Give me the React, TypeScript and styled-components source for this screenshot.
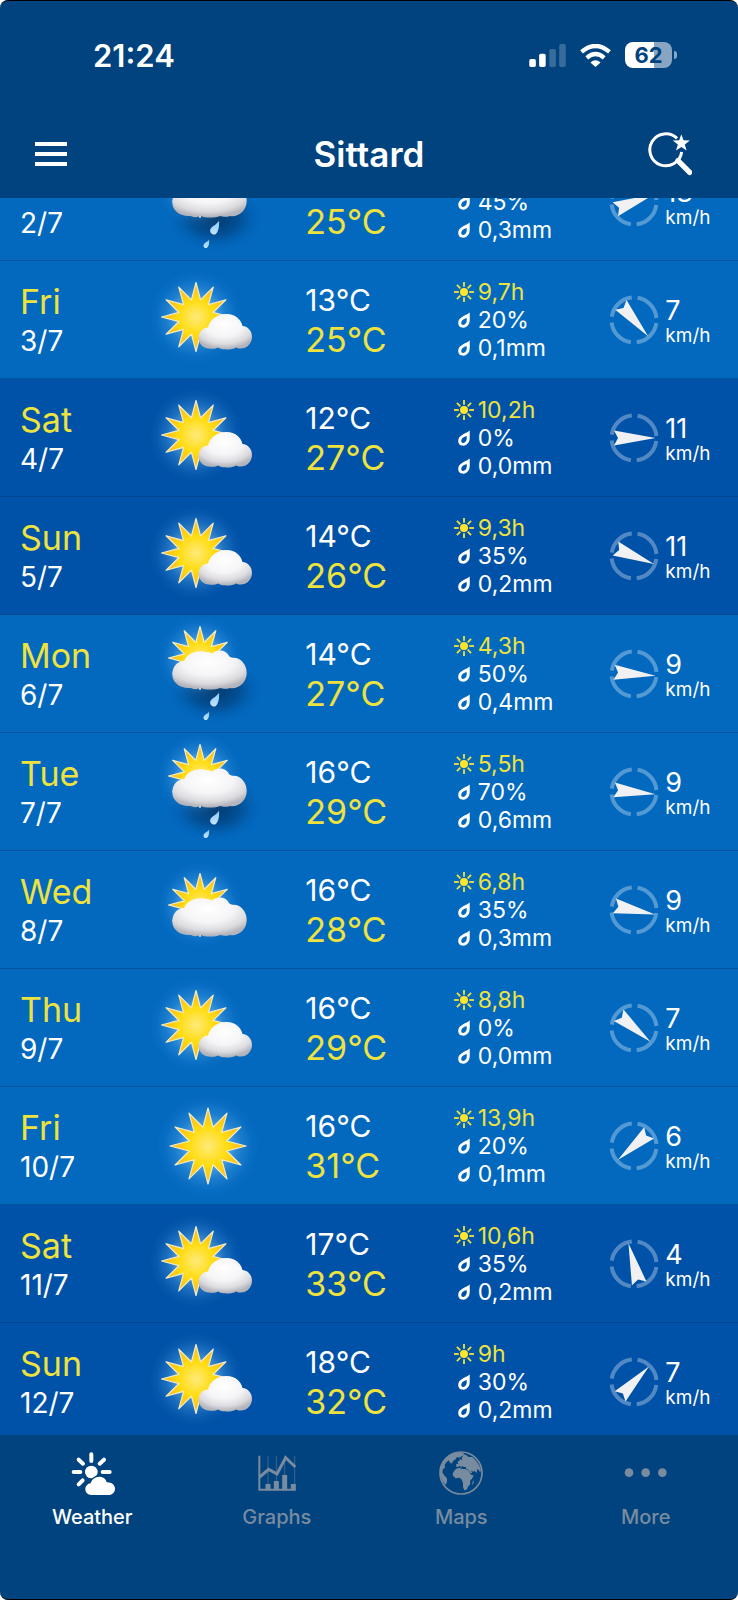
import { memo, ReactNode, useLayoutEffect, useRef } from "react";
import styled, { createGlobalStyle, css } from "styled-components";

type Sky = 'sun' | 'partly' | 'cloudy' | 'rain'

interface Day {
    name:string
    date:string
    sky:Sky
    low:number
    high:number
    sun:string
    chance:string
    rain:string
    wind:number
    angle:number
    weekend?:boolean
}

const days:Day[] = [
    {name:'Thu', date:'2/7', sky:'rain', low:15, high:25, sun:'5,1h', chance:'45%', rain:'0,3mm', wind:13, angle:-21},
    {name:'Fri', date:'3/7', sky:'partly', low:13, high:25, sun:'9,7h', chance:'20%', rain:'0,1mm', wind:7, angle:49},
    {name:'Sat', date:'4/7', sky:'partly', low:12, high:27, sun:'10,2h', chance:'0%', rain:'0,0mm', wind:11, angle:0, weekend:true},
    {name:'Sun', date:'5/7', sky:'partly', low:14, high:26, sun:'9,3h', chance:'35%', rain:'0,2mm', wind:11, angle:22, weekend:true},
    {name:'Mon', date:'6/7', sky:'rain', low:14, high:27, sun:'4,3h', chance:'50%', rain:'0,4mm', wind:9, angle:5},
    {name:'Tue', date:'7/7', sky:'rain', low:16, high:29, sun:'5,5h', chance:'70%', rain:'0,6mm', wind:9, angle:6},
    {name:'Wed', date:'8/7', sky:'cloudy', low:16, high:28, sun:'6,8h', chance:'35%', rain:'0,3mm', wind:9, angle:12},
    {name:'Thu', date:'9/7', sky:'partly', low:16, high:29, sun:'8,8h', chance:'0%', rain:'0,0mm', wind:7, angle:40},
    {name:'Fri', date:'10/7', sky:'sun', low:16, high:31, sun:'13,9h', chance:'20%', rain:'0,1mm', wind:6, angle:139},
    {name:'Sat', date:'11/7', sky:'partly', low:17, high:33, sun:'10,6h', chance:'35%', rain:'0,2mm', wind:4, angle:-105, weekend:true},
    {name:'Sun', date:'12/7', sky:'partly', low:18, high:32, sun:'9h', chance:'30%', rain:'0,2mm', wind:7, angle:-46, weekend:true},
]

const star = (cx:number, cy:number, outer:number, inner:number, spikes:number)=>{
    const points:string[] = []
    for(let i = 0; i < spikes * 2; i++){
        const r = i % 2 === 0 ? outer : inner
        const a = Math.PI * i / spikes - Math.PI / 2
        points.push(`${(cx + r * Math.cos(a)).toFixed(2)},${(cy + r * Math.sin(a)).toFixed(2)}`)
    }
    return points.join(' ')
}

const SMALL_CLOUD = "M60 66.5C62 58 70 52.5 79 53C87 53 93 58 94.5 65C100 65.5 104 70 104 76C104 83 98 88 92 87.5C90 87.5 89 87 88 86.5C85 88.5 80 88.8 77 88.3C74 88.5 72 87.5 70 86.5C68 87.8 64 88 61 87.5C55 87 50.5 82.5 50.5 77C50.5 71 55 66.5 60 66.5Z"
const BIG_CLOUD = "M36 57C39 50 47 46 56 47.5C60 48 62 48.5 64 49.5C68 45 78 45 81 52C82 53 82.5 53.5 83 54C92 52 98.7 60 98.7 69C98.7 79 90 85.5 82 84C78 85.2 75 85 72 84C67 86 57 86 53 84C49 85.500 45 85.500 43 84C33 85 24.3 79 24.3 70.5C24.3 62 30 57 36 57Z"

/* shared gradients, referenced by every sky icon */
const SkyDefs = ()=>(
    <HiddenSvg aria-hidden="true">
        <defs>
            <radialGradient id="glow">
                <stop offset="0.4" stopColor="#8fd0ff" stopOpacity="0.55" />
                <stop offset="0.65" stopColor="#5aaef5" stopOpacity="0.28" />
                <stop offset="0.85" stopColor="#5aaef5" stopOpacity="0.07" />
                <stop offset="1" stopColor="#5aaef5" stopOpacity="0" />
            </radialGradient>
            <radialGradient id="sunFill">
                <stop offset="0" stopColor="#ffea7a" />
                <stop offset="0.5" stopColor="#ffdc10" />
                <stop offset="1" stopColor="#f9b420" />
            </radialGradient>
            <radialGradient id="cloudFill" cx="0.48" cy="0.3" r="0.68">
                <stop offset="0" stopColor="#ffffff" />
                <stop offset="0.5" stopColor="#f5f5f7" />
                <stop offset="0.8" stopColor="#dcdce0" />
                <stop offset="1" stopColor="#b4b5bc" />
            </radialGradient>
            <radialGradient id="shade">
                <stop offset="0" stopColor="#02325f" stopOpacity="0.9" />
                <stop offset="0.5" stopColor="#02407c" stopOpacity="0.65" />
                <stop offset="0.8" stopColor="#024a90" stopOpacity="0.2" />
                <stop offset="1" stopColor="#0250a0" stopOpacity="0" />
            </radialGradient>
            <linearGradient id="dropFill" x1="0" y1="0" x2="0" y2="1">
                <stop offset="0" stopColor="#8cc6f5" />
                <stop offset="1" stopColor="#c3e4ff" />
            </linearGradient>
        </defs>
    </HiddenSvg>
)

const Sun = ({cx, cy, r}:{cx:number, cy:number, r:number})=>(
    <>
        <circle cx={cx} cy={cy} r={r * 1.35} fill="url(#glow)" />
        <polygon
            points={star(cx, cy, r, r * 0.51, 12)}
            fill="url(#sunFill)" stroke="#f3ebc4" strokeWidth="1.2" strokeLinejoin="round"
        />
    </>
)

const SkyIcon = memo(({sky}:{sky:Sky})=>{
    if(sky === 'sun'){
        return (
            <StyledSky viewBox="0 0 120 117" role="img" aria-label="Sunny">
                <Sun cx={60} cy={59} r={38} />
            </StyledSky>
        )
    }
    if(sky === 'partly'){
        return (
            <StyledSky viewBox="0 0 120 117" role="img" aria-label="Partly cloudy">
                <Sun cx={48} cy={56} r={34.5} />
                <path d={SMALL_CLOUD} fill="url(#cloudFill)" />
            </StyledSky>
        )
    }
    return (
        <StyledSky viewBox="0 0 120 117" role="img" aria-label={sky === 'rain' ? 'Showers' : 'Mostly cloudy'}>
            <g transform={sky === 'rain' ? 'translate(0 -11)' : undefined}>
                {sky === 'rain' && <ellipse cx="67" cy="86" rx="47" ry="33" fill="url(#shade)" />}
                <Sun cx={52} cy={54} r={31.5} />
                <path d={BIG_CLOUD} fill="url(#cloudFill)" />
                {sky === 'rain' && (
                    <g fill="url(#dropFill)">
                        <path d="M71 88.500C71.500 94 70.500 100 67.500 102.200C64.500 103.500 61 100.500 62.500 97C64 94 69 92.500 71 88.500Z" />
                        <path d="M61 107.500C61.500 111 60.800 115 58.500 116C56 116.500 54.800 114 56 112C57.500 110 60 109.800 61 107.500Z" />
                    </g>
                )}
            </g>
        </StyledSky>
    )
})

const RayIcon = ()=>(
    <StyledSmallIcon viewBox="0 0 20 20" aria-hidden="true">
        <circle cx="10" cy="10" r="4" fill="#ffe52e" />
        <g stroke="#f3e43c" strokeWidth="1.8">
            {[0, 45, 90, 135, 180, 225, 270, 315].map((a)=>(
                <path key={a} d="M15.2 10H20" transform={`rotate(${a} 10 10)`} />
            ))}
        </g>
    </StyledSmallIcon>
)

const DropIcon = ()=>(
    <StyledSmallIcon viewBox="0 0 20 20" aria-hidden="true">
        <path
            d="M15.8 2.5C15.4 5.500 16.3 9.500 15.3 13C14 16.800 10.500 18.200 7.800 17.600C4.800 16.900 3.700 14 4.500 11C5.800 6.800 11 6 15.8 2.5ZM12.600 8C10 8.900 7.800 10 7.300 12.200C6.900 14 8 15 9.300 14.900C11.200 14.700 12.500 13 12.700 11C12.800 10 12.800 9 12.600 8Z"
            fill="#fff" fillRule="evenodd"
        />
    </StyledSmallIcon>
)

const Compass = ({angle}:{angle:number})=>(
    <StyledCompass viewBox="0 0 50 50" aria-hidden="true">
        <circle
            cx="25" cy="25" r="22.500" fill="none" stroke="#fff" strokeOpacity="0.32"
            strokeWidth="4" strokeDasharray="29.340 6" strokeDashoffset="-3"
        />
        <path d="M46.500 25L5 32.500L9 25L5 17.500Z" fill="#f1f1f3" transform={`rotate(${angle} 25 25)`} />
    </StyledCompass>
)

const WeatherIcon = ()=>(
    <StyledTabIcon viewBox="0 0 132 132">
        <circle cx="64" cy="63" r="19" fill="currentColor" />
        <path
            d="M64 10V30M98 63H119M11 63H31M26 26L39 38M102 26L89 38M26 100L38 88"
            stroke="currentColor" strokeWidth="12" strokeLinecap="round"
        />
        <path
            d="M64 132C54 132 46 125 46 115C46 105 53 98 62 97C64 86 76 76 90 77C102 78 109 86 110 94C124 93 135 102 135 113C135 124 126 132 116 132Z"
            fill="currentColor" stroke="#00437e" strokeWidth="8" paintOrder="stroke"
        />
    </StyledTabIcon>
)

const GraphsIcon = ()=>(
    <StyledTabIcon viewBox="0 0 132 132" fill="none" stroke="currentColor">
        <path d="M39 14V115M64 14V115M89 14V115M119 14V115" strokeWidth="3" strokeOpacity="0.5" />
        <path d="M13 14V116H122" strokeWidth="6" />
        <path d="M14 78L41 55L66 69L92 20L121 48" strokeWidth="9" />
        <path d="M39 99V118M64 90V118M89 72V118M115 99V118" strokeWidth="15" />
    </StyledTabIcon>
)

const MapsIcon = ()=>(
    <StyledTabIcon viewBox="0 0 132 132" fill="currentColor">
        <circle cx="66" cy="66" r="63" fill="none" stroke="currentColor" strokeWidth="5" />
        {/* Americas and Greenland */}
        <path d="M5 50L12 33L24 19L40 8L60 3L72 6L78 12L68 15L62 20L54 18L50 25L43 29L38 38L32 34L30 28L22 34L17 42L18 50L12 54L10 64L15 72L24 82L24 92L20 102L10 90L3 70Z" />
        {/* Europe and Asia */}
        <path d="M52 47L51 40L58 38L55 32L61 30L62 25L70 26L68 20L74 12L82 12L88 18L100 18L112 30L121 44L126 58L123 64L119 56L115 54L113 66L107 60L102 62L96 58L100 67L94 66L88 56L80 53L82 48L74 48L70 44L68 50L62 44L57 48Z" />
        {/* Africa */}
        <path d="M45 61L51 53L62 50L68 54L78 54L88 58L93 67L98 73L104 72L101 80L93 90L94 99L87 107L83 116L76 118L72 108L72 96L67 84L60 80L50 82L42 74L41 68Z" />
        <path d="M101 92L105 88L103 98L99 103Z" />
    </StyledTabIcon>
)

const MoreIcon = ()=>(
    <StyledTabIcon viewBox="0 0 132 132" fill="currentColor">
        <circle cx="15" cy="65" r="13" />
        <circle cx="65" cy="65" r="13" />
        <circle cx="115" cy="65" r="13" />
    </StyledTabIcon>
)

const Tab = ({label, active, children}:{label:string, active?:boolean, children:ReactNode})=>(
    <TabButton type="button" $active={active} aria-current={active ? 'page' : undefined}>
        {children}
        <span>{label}</span>
    </TabButton>
)

const StatusBar = ()=>(
    <StyledStatusBar>
        <Clock>21:24</Clock>
        <StatusIcons>
            <svg width="37" height="23" viewBox="0 0 111 70" fill="#fff" aria-hidden="true">
                <rect y="46" width="20" height="24" rx="5" />
                <rect x="30" y="30" width="20" height="40" rx="5" />
                <rect x="61" y="15" width="20" height="55" rx="5" opacity="0.22" />
                <rect x="91" width="20" height="70" rx="5" opacity="0.22" />
            </svg>
            <svg width="31" height="23" viewBox="0 0 93 70" fill="none" stroke="#fff" strokeWidth="13" aria-hidden="true">
                <path d="M4 24Q46.500 -12 89 24" />
                <path d="M20 42Q46.500 19 73 42" />
                <path d="M31 56Q46.500 43 62 56L46.500 70Z" fill="#fff" stroke="none" />
            </svg>
            <BatteryWrap>
                <Battery>62</Battery>
                <BatteryTip />
            </BatteryWrap>
        </StatusIcons>
    </StyledStatusBar>
)

const Row = memo(({day}:{day:Day})=>(
    <StyledRow $weekend={day.weekend}>
        <DayCell scope="row">
            <DayName>{day.name}</DayName>
            <DayDate>{day.date}</DayDate>
        </DayCell>
        <td><SkyIcon sky={day.sky} /></td>
        <TempCell>
            <Low>{day.low}°C</Low>
            <High>{day.high}°C</High>
        </TempCell>
        <DetailCell>
            <Detail $sunny><RayIcon />{day.sun}</Detail>
            <Detail><DropIcon />{day.chance}</Detail>
            <Detail><DropIcon />{day.rain}</Detail>
        </DetailCell>
        <WindCell>
            <Wind>
                <Compass angle={day.angle} />
                <WindText>
                    <Speed>{day.wind}</Speed>
                    <Unit>km/h</Unit>
                </WindText>
            </Wind>
        </WindCell>
    </StyledRow>
))

const App = ()=>{
    const listRef = useRef<HTMLElement>(null)

    useLayoutEffect(()=>{
        if(listRef.current) listRef.current.scrollTop = 55
    }, [])

    return (
        <>
            <GlobalStyle />
            <SkyDefs />
            <Screen>
                <header>
                    <StatusBar />
                    <NavBar>
                        <IconButton type="button" aria-label="Menu">
                            <svg width="32" height="24" viewBox="0 0 32 24" fill="#fff">
                                <rect width="32" height="4" />
                                <rect y="10" width="32" height="4" />
                                <rect y="20" width="32" height="4" />
                            </svg>
                        </IconButton>
                        <Title>Sittard</Title>
                        <IconButton type="button" $end aria-label="Search places">
                            <svg width="44" height="44" viewBox="0 0 132 132" fill="none" stroke="#fff">
                                <path d="M87 19A48 48 0 1 0 101 60" strokeWidth="9" />
                                <path d="M90 86L125 121" strokeWidth="16" strokeLinecap="round" />
                                <polygon points={star(100, 34, 27, 11, 5)} fill="#fff" stroke="none" />
                            </svg>
                        </IconButton>
                    </NavBar>
                </header>
                <List ref={listRef}>
                    <Table>
                        <colgroup>
                            <Col $width={20} />
                            <Col $width={16.5} />
                            <Col $width={22} />
                            <Col $width={20} />
                            <Col $width={21.5} />
                        </colgroup>
                        <tbody>
                            {days.map((day)=><Row key={day.date} day={day} />)}
                        </tbody>
                    </Table>
                </List>
                <TabBar>
                    <Tab label="Weather" active><WeatherIcon /></Tab>
                    <Tab label="Graphs"><GraphsIcon /></Tab>
                    <Tab label="Maps"><MapsIcon /></Tab>
                    <Tab label="More"><MoreIcon /></Tab>
                </TabBar>
            </Screen>
        </>
    )
}
export default App

const GlobalStyle = createGlobalStyle`
    :root{
        --bar:#00437e;
        --weekday:#0269bf;
        --weekend:#0052a8;
        --yellow:#eee23e;
    }

    *{
        box-sizing:border-box;
    }

    body{
        margin:0;
        background:#fff;
        color:#fff;
        font-family:Inter, "Liberation Sans", sans-serif;
    }

    button{
        padding:0;
        border:0;
        background:none;
        color:inherit;
        font:inherit;
        cursor:pointer;
    }
`

const HiddenSvg = styled.svg`
    position:absolute;
    width:0;
    height:0;
`

const Screen = styled.div`
    display:flex;
    flex-direction:column;
    height:100vh;
    overflow:hidden;
    background:var(--bar);
    border-top:1px solid #000;
    border-bottom:1px solid #000;
    border-radius:8px;
`

const StyledStatusBar = styled.div`
    display:flex;
    align-items:center;
    justify-content:space-between;
    height:108px;
    padding:0 61px 0 93px;
`

const Clock = styled.time`
    font-size:31px;
    font-weight:600;
`

const StatusIcons = styled.div`
    display:flex;
    align-items:center;
    gap:14px;
`

const BatteryWrap = styled.div`
    display:flex;
    align-items:center;
    gap:2px;
`

const Battery = styled.span`
    width:47px;
    border-radius:8px;
    background:linear-gradient(90deg, #fff 62%, #88a5c3 62%);
    color:var(--bar);
    font-size:22px;
    font-weight:700;
    line-height:26px;
    text-align:center;
`

const BatteryTip = styled.span`
    width:3px;
    height:8px;
    border-radius:0 4px 4px 0;
    background:#88a5c3;
`

const NavBar = styled.div`
    display:grid;
    grid-template-columns:1fr auto 1fr;
    align-items:center;
    height:89px;
    padding:0 35px;
`

const Title = styled.h1`
    margin:0;
    font-size:35px;
    font-weight:600;
    line-height:44px;
`

const IconButton = styled.button<{$end?:boolean}>`
    display:flex;
    align-items:center;
    justify-self:start;
    height:44px;

    ${(props)=>props.$end && css`
        justify-self:end;
        margin-right:11px;
    `}
`

const List = styled.main`
    flex:1;
    min-height:0;
    overflow-y:auto;
    scrollbar-width:none;
`

const Table = styled.table`
    width:100%;
    table-layout:fixed;
    border-spacing:0;

    th, td{
        height:118px;
        padding:0;
        border-bottom:1px solid rgba(0, 45, 100, 0.35);
        text-align:left;
        font-weight:400;
        vertical-align:middle;
    }
`

const Col = styled.col<{$width:number}>`
    width:${(props)=>props.$width}%;
`

const StyledRow = styled.tr<{$weekend?:boolean}>`
    background:${(props)=>props.$weekend ? 'var(--weekend)' : 'var(--weekday)'};
`

const DayCell = styled.th`
    && {
        padding-top:2px;
        padding-left:20px;
    }
`

const DayName = styled.div`
    color:var(--yellow);
    font-size:34px;
    line-height:40px;
`

const DayDate = styled.div`
    font-size:28px;
    line-height:38px;
`

const StyledSky = styled.svg`
    display:block;
    width:120px;
    height:117px;
    margin:0 auto;
`

const TempCell = styled.td`
    && {
        padding-left:36px;
    }
`

const Low = styled.div`
    font-size:30px;
    line-height:40px;
`

const High = styled.div`
    color:var(--yellow);
    font-size:34px;
    line-height:40px;
`

const DetailCell = styled.td`
    && {
        padding-left:22px;
    }
`

const Detail = styled.div<{$sunny?:boolean}>`
    display:flex;
    align-items:center;
    gap:4px;
    font-size:23px;
    line-height:28px;
    white-space:nowrap;

    ${(props)=>props.$sunny && css`
        color:var(--yellow);
    `}
`

const StyledSmallIcon = styled.svg`
    flex:none;
    width:20px;
    height:20px;
`

const WindCell = styled.td`
    && {
        padding-left:30px;
    }
`

const Wind = styled.div`
    display:flex;
    align-items:center;
    gap:6px;
`

const StyledCompass = styled.svg`
    flex:none;
    width:50px;
    height:50px;
`

const WindText = styled.div`
    padding-top:4px;
`

const Speed = styled.div`
    font-size:27px;
    line-height:28px;
`

const Unit = styled.div`
    font-size:19px;
    line-height:22px;
`

const TabBar = styled.nav`
    display:grid;
    grid-template-columns:repeat(4, 1fr);
    align-items:start;
    height:164px;
    padding-top:16px;
`

const TabButton = styled.button<{$active?:boolean}>`
    && {
        color:${(props)=>props.$active ? '#fff' : '#788b9f'};
    }

    display:flex;
    flex-direction:column;
    align-items:center;
    gap:9px;

    span{
        font-size:20px;
        font-weight:500;
        line-height:26px;
    }
`

const StyledTabIcon = styled.svg`
    width:44px;
    height:44px;
    overflow:visible;
`
